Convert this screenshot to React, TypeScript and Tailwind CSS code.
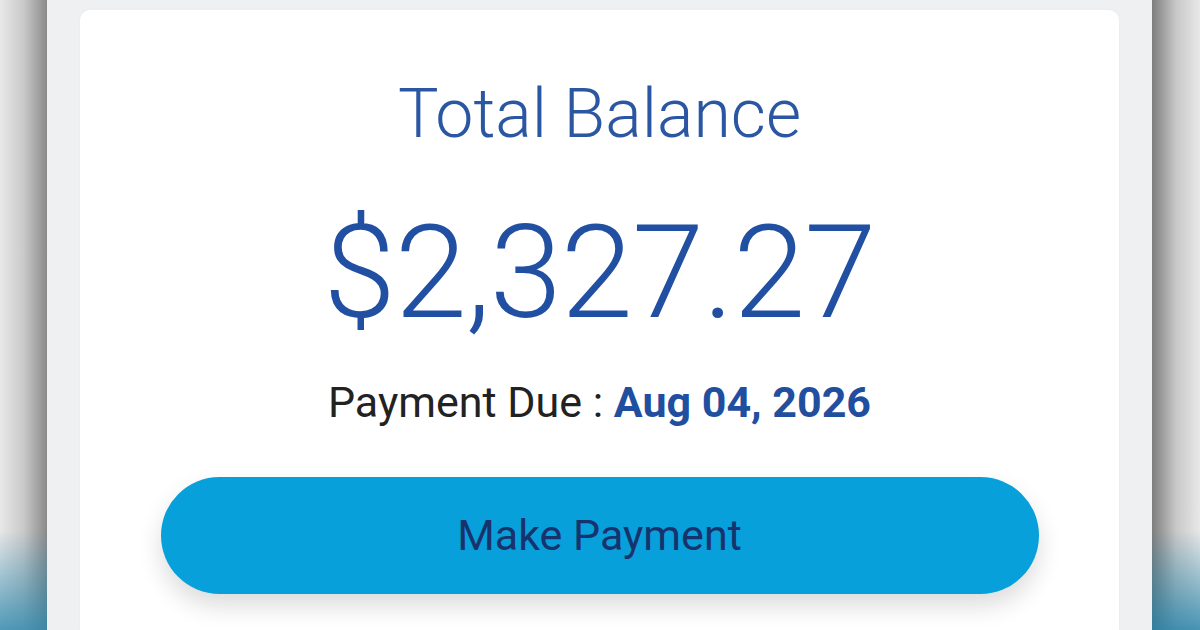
export default function App() {
  return (
    <div className="flex h-[630px] w-[1200px] overflow-hidden bg-[#eceef0] font-['Roboto',sans-serif]">
      {/* left edge of the phone */}
      <div className="relative w-[47px] shrink-0 bg-gradient-to-r from-[#e8e8e8] via-[#cacaca] to-[#8a8a8a]">
        <div className="absolute inset-x-0 bottom-0 h-[100px] bg-gradient-to-b from-transparent to-[#2a86ab]/80" />
      </div>

      <div className="flex flex-1 flex-col bg-[#eef0f2] px-[33px] pt-[10px]">
        <div className="flex flex-1 flex-col items-center rounded-t-[10px] bg-white shadow-[0_0_3px_rgba(0,0,0,0.04)]">
          <h1 className="mt-[70px] text-[68px] font-light leading-none text-[#2a56a2]">Total Balance</h1>
          <div className="mt-[60px] text-[130px] font-light leading-none tracking-[-1px] text-[#2150a2]">$2,327.27</div>
          <p className="mt-[43px] text-[43px] leading-none text-[#222]">
            Payment Due : <span className="font-bold text-[#1f4f9e]">Aug 04, 2026</span>
          </p>
          <button className="mt-[53px] flex h-[117px] w-[878px] items-center justify-center rounded-full bg-[#08a0da] text-[43px] text-[#17336e] shadow-[0_12px_24px_rgba(0,0,0,0.14)]">
            Make Payment
          </button>
        </div>
      </div>

      {/* right edge of the phone */}
      <div className="relative w-[48px] shrink-0 bg-gradient-to-r from-[#7e7e7e] via-[#c8c8c8] to-[#e8e8e8]">
        <div className="absolute inset-x-0 bottom-0 h-[100px] bg-gradient-to-b from-transparent to-[#1f7fa6]/80" />
      </div>
    </div>
  )
}
